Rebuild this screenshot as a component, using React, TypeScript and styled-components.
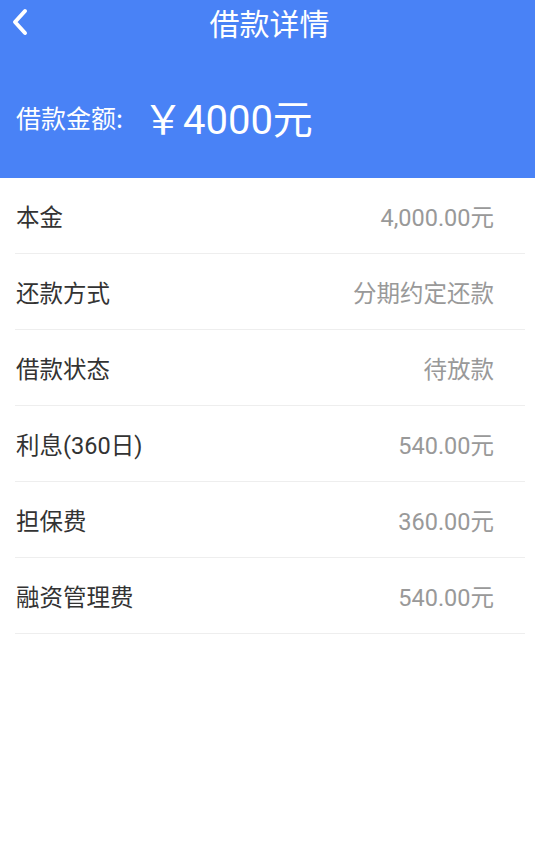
import styled, { createGlobalStyle } from 'styled-components'

const GlobalStyle = createGlobalStyle`
  html, body {
    margin: 0;
    padding: 0;
    background: #fff;
  }
  body {
    font-family: Roboto, "Noto Sans CJK SC", sans-serif;
  }
`

const rows = [
  { label: '本金', value: '4,000.00元' },
  { label: '还款方式', value: '分期约定还款' },
  { label: '借款状态', value: '待放款' },
  { label: '利息(360日)', value: '540.00元' },
  { label: '担保费', value: '360.00元' },
  { label: '融资管理费', value: '540.00元' },
]

export default function App() {
  return (
    <Page>
      <GlobalStyle />
      <Header>
        <NavBar>
          <BackButton>
            <svg width="20" height="28" viewBox="0 0 20 28">
              <path
                d="M15 3 L5 14 L15 25"
                fill="none"
                stroke="#fff"
                strokeWidth="4"
                strokeLinecap="round"
                strokeLinejoin="round"
              />
            </svg>
          </BackButton>
          <Title>借款详情</Title>
        </NavBar>
        <Amount>
          <AmountLabel>借款金额:</AmountLabel>
          <AmountValue>￥4000元</AmountValue>
        </Amount>
      </Header>
      <List>
        {rows.map((r) => (
          <Row key={r.label}>
            <Label>{r.label}</Label>
            <Value>{r.value}</Value>
          </Row>
        ))}
      </List>
    </Page>
  )
}

const Page = styled.div`
  width: 535px;
  min-height: 847px;
  background: #fff;
`

const Header = styled.header`
  background: #4982f6;
  height: 178px;
  box-sizing: border-box;
  display: flex;
  flex-direction: column;
`

const NavBar = styled.div`
  position: relative;
  height: 44px;
  display: flex;
  align-items: center;
  justify-content: center;
`

const BackButton = styled.div`
  position: absolute;
  left: 10px;
  top: 7px;
  width: 24px;
  height: 30px;
  display: flex;
  align-items: center;
`

const Title = styled.h1`
  margin: 0 0 0 4px;
  color: #fff;
  font-size: 30px;
  font-weight: 400;
  font-family: "Noto Sans CJK SC", sans-serif;
`

const Amount = styled.div`
  display: flex;
  align-items: center;
  padding: 0 16px;
  margin-top: 49px;
  height: 48px;
  color: #fff;
`

const AmountLabel = styled.span`
  font-size: 25px;
  font-family: "Noto Sans CJK SC", sans-serif;
  margin-right: 20px;
`

const AmountValue = styled.span`
  font-size: 40px;
  font-family: Roboto, "Noto Sans CJK SC", sans-serif;
`

const List = styled.div`
  padding: 0 10px 0 15px;
`

const Row = styled.div`
  height: 76px;
  box-sizing: border-box;
  border-bottom: 1px solid #eeeeee;
  display: flex;
  align-items: center;
  justify-content: space-between;
  padding: 0 31px 0 1px;
`

const Label = styled.span`
  font-size: 23.5px;
  color: #333;
  font-family: Roboto, "Noto Sans CJK SC", sans-serif;
`

const Value = styled.span`
  font-size: 23.5px;
  color: #999;
  font-family: Roboto, "Noto Sans CJK SC", sans-serif;
`
